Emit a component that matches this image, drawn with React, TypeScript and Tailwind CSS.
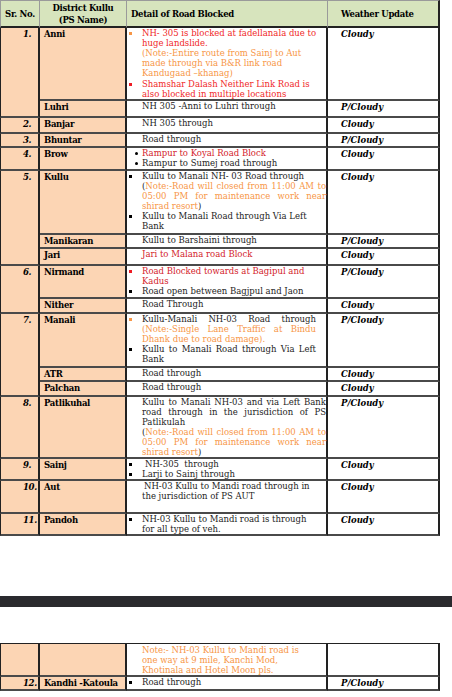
import React from 'react'

type Bul = 'sq' | 'red' | 'orange' | 'dot' | 'none'

const R = 'text-[#f02828]'
const R2 = 'text-[#d3222a]'
const O = 'text-[#f79646]'

function Item({ b = 'none', children }: { b?: Bul; children: React.ReactNode }) {
  let mark: React.ReactNode = null
  if (b === 'sq') mark = <span className="mt-[4px] ml-[2px] block h-[3px] w-[3px] bg-black" />
  if (b === 'red') mark = <span className="mt-[4px] ml-[2px] block h-[3px] w-[3px] bg-[#ee1c25]" />
  if (b === 'orange') mark = <span className="mt-[4px] ml-[2px] block h-[3px] w-[3px] bg-[#f79646]" />
  if (b === 'dot') mark = <span className="mt-[4px] ml-[8px] block h-[3px] w-[3px] rounded-full bg-black" />
  return (
    <div className="flex">
      <div className="w-[15px] shrink-0">{mark}</div>
      <div className="min-w-0 flex-1">{children}</div>
    </div>
  )
}

function L({ className = '', children }: { className?: string; children: React.ReactNode }) {
  return <div className={`whitespace-nowrap ${className}`}>{children}</div>
}

function J({ className = '', children }: { className?: string; children: React.ReactNode }) {
  return <div className={`text-justify [text-align-last:justify] ${className}`}>{children}</div>
}

type Row = { name: string; h: string; w: string; d: React.ReactNode }
type Group = { sr: string; rows: Row[] }

const groups: Group[] = [
  {
    sr: '1.',
    rows: [
      {
        name: 'Anni',
        h: 'h-[73px]',
        w: 'Cloudy',
        d: (
          <>
            <Item b="orange">
              <L className={R}>NH- 305 is blocked at fadellanala due to</L>
              <L className={R}>huge landslide.</L>
              <L className={O}>(Note:-Entire route from Sainj to Aut</L>
              <L className={O}>made through via B&amp;R link road</L>
              <L className={O}>Kandugaad –khanag)</L>
            </Item>
            <div className="h-[1px]" />
            <Item b="red">
              <L className={R}>Shamshar Dalash Neither Link Road is</L>
              <L className={R}>also blocked in multiple locations</L>
            </Item>
          </>
        ),
      },
      { name: 'Luhri', h: 'h-[17px]', w: 'P/Cloudy', d: <Item>NH 305 -Anni to Luhri through</Item> },
    ],
  },
  { sr: '2.', rows: [{ name: 'Banjar', h: 'h-[16px]', w: 'Cloudy', d: <Item>NH 305 through</Item> }] },
  { sr: '3.', rows: [{ name: 'Bhuntar', h: 'h-[14px]', w: 'P/Cloudy', d: <Item>Road through</Item> }] },
  {
    sr: '4.',
    rows: [
      {
        name: 'Brow',
        h: 'h-[23px]',
        w: 'Cloudy',
        d: (
          <>
            <Item b="dot">
              <L className={R2}>Rampur to Koyal Road Block</L>
            </Item>
            <Item b="dot">
              <L>Rampur to Sumej road through</L>
            </Item>
          </>
        ),
      },
    ],
  },
  {
    sr: '5.',
    rows: [
      {
        name: 'Kullu',
        h: 'h-[64px]',
        w: 'Cloudy',
        d: (
          <>
            <Item b="sq">
              <L>Kullu to Manali NH- 03 Road through</L>
              <J>
                (<span className={O}>Note:-Road will closed from 11:00 AM to</span>
              </J>
              <J className={O}>05:00 PM for maintenance work near</J>
              <L>
                <span className={O}>shirad resort</span>)
              </L>
            </Item>
            <Item b="sq">
              <L>Kullu to Manali Road through Via Left</L>
              <L>Bank</L>
            </Item>
          </>
        ),
      },
      { name: 'Manikaran', h: 'h-[14px]', w: 'P/Cloudy', d: <Item>Kullu to Barshaini through</Item> },
      {
        name: 'Jari',
        h: 'h-[17px]',
        w: 'Cloudy',
        d: (
          <Item>
            <L className={R2}>Jari to Malana road Block</L>
          </Item>
        ),
      },
    ],
  },
  {
    sr: '6.',
    rows: [
      {
        name: 'Nirmand',
        h: 'h-[33px]',
        w: 'P/Cloudy',
        d: (
          <>
            <Item b="red">
              <L className={R2}>Road Blocked towards at Bagipul and</L>
              <L className={R2}>Kadus</L>
            </Item>
            <Item b="sq">
              <L>Road open between Bagjpul and Jaon</L>
            </Item>
          </>
        ),
      },
      { name: 'Nither', h: 'h-[15px]', w: 'Cloudy', d: <Item>Road Through</Item> },
    ],
  },
  {
    sr: '7.',
    rows: [
      {
        name: 'Manali',
        h: 'h-[54px]',
        w: 'P/Cloudy',
        d: (
          <div className="w-[189px]">
            <Item b="orange">
              <J>Kullu-Manali NH-03 Road through</J>
              <J className={O}>(Note:-Single Lane Traffic at Bindu</J>
              <L className={O}>Dhank due to road damage).</L>
            </Item>
            <Item b="sq">
              <J>Kullu to Manali Road through Via Left</J>
              <L>Bank</L>
            </Item>
          </div>
        ),
      },
      { name: 'ATR', h: 'h-[14px]', w: 'Cloudy', d: <Item>Road through</Item> },
      { name: 'Palchan', h: 'h-[15px]', w: 'Cloudy', d: <Item>Road through</Item> },
    ],
  },
  {
    sr: '8.',
    rows: [
      {
        name: 'Patlikuhal',
        h: 'h-[62px]',
        w: 'P/Cloudy',
        d: (
          <Item>
            <J>Kullu to Manali NH-03 and via Left Bank</J>
            <J>road through in the jurisdiction of PS</J>
            <L>Patlikulah</L>
            <J>
              (<span className={O}>Note:-Road will closed from 11:00 AM to</span>
            </J>
            <J className={O}>05:00 PM for maintenance work near</J>
            <L>
              <span className={O}>shirad resort</span>)
            </L>
          </Item>
        ),
      },
    ],
  },
  {
    sr: '9.',
    rows: [
      {
        name: 'Sainj',
        h: 'h-[22px]',
        w: 'Cloudy',
        d: (
          <>
            <Item b="sq">
              <L className="pl-[3px]">NH-305&nbsp; through</L>
            </Item>
            <Item b="sq">
              <L>Larji to Sainj through</L>
            </Item>
          </>
        ),
      },
    ],
  },
  {
    sr: '10.',
    rows: [
      {
        name: 'Aut',
        h: 'h-[33px]',
        w: 'Cloudy',
        d: (
          <Item>
            <L className="pl-[2px]">NH-03 Kullu to Mandi road through in</L>
            <L>the jurisdiction of PS AUT</L>
          </Item>
        ),
      },
    ],
  },
  {
    sr: '11.',
    rows: [
      {
        name: 'Pandoh',
        h: 'h-[21px]',
        w: 'Cloudy',
        d: (
          <Item b="sq">
            <L>NH-03 Kullu to Mandi road is through</L>
            <L>for all type of veh.</L>
          </Item>
        ),
      },
    ],
  },
]

const srCell =
  'border-l border-r-2 border-b-2 border-l-[#222] border-r-[#222] border-b-[#4a4a4a] bg-[#fcd5b4] align-top pl-[22px] pt-[1px] text-[8.6px] leading-[11px] tracking-[-0.4px] font-bold italic text-black whitespace-nowrap'
const nameCell =
  'border-r-2 border-b-2 border-r-[#222] border-b-[#4a4a4a] bg-[#fcd5b4] align-top pl-[4px] pt-[1px] font-bold tracking-[-0.3px] text-black whitespace-nowrap'
const detailCell = 'border-r-2 border-b-2 border-r-[#222] border-b-[#4a4a4a] bg-white align-top'
const weatherCell =
  'border-r-2 border-b-2 border-r-[#222] border-b-[#4a4a4a] bg-white align-top pl-[13px] pt-[1px] font-bold italic text-black'

function Cols() {
  return (
    <colgroup>
      <col className="w-[40px]" />
      <col className="w-[87px]" />
      <col className="w-[201px]" />
      <col className="w-[112px]" />
    </colgroup>
  )
}

export default function App() {
  return (
    <div className="h-[697px] w-[452px] overflow-hidden bg-white font-['DejaVu_Serif',serif] text-[8.5px] leading-[10px] text-[#1c1c1c]">
      <table className="w-[440px] table-fixed border-separate border-spacing-0">
        <Cols />
        <thead>
          <tr className="h-[28px] bg-[#d7e4bd] font-bold tracking-[-0.3px] text-black">
            <th className="border-t border-l border-r border-b-2 border-t-[#9a9a9a] border-l-[#9a9a9a] border-r-[#9a9a9a] border-b-[#222] text-center align-middle">
              Sr. No.
            </th>
            <th className="border-t border-r border-b-2 border-t-[#9a9a9a] border-r-[#9a9a9a] border-b-[#222] text-center align-middle leading-[12px]">
              District Kullu
              <br />
              (PS Name)
            </th>
            <th className="border-t border-r border-b-2 border-t-[#9a9a9a] border-r-[#9a9a9a] border-b-[#222] pl-[4px] text-left align-middle">
              Detail of Road Blocked
            </th>
            <th className="border-t border-r-2 border-b-2 border-t-[#9a9a9a] border-r-[#222] border-b-[#222] pl-[13px] text-left align-middle">
              Weather Update
            </th>
          </tr>
        </thead>
        <tbody>
          {groups.map((g) =>
            g.rows.map((r, i) => (
              <tr key={g.sr + r.name} className={r.h}>
                {i === 0 && (
                  <td rowSpan={g.rows.length} className={srCell}>
                    {g.sr}
                  </td>
                )}
                <td className={nameCell}>{r.name}</td>
                <td className={detailCell}>{r.d}</td>
                <td className={weatherCell}>{r.w}</td>
              </tr>
            ))
          )}
        </tbody>
      </table>

      <div className="mt-[60px] h-[11px] w-[452px] bg-[#2a2a2e]" />

      <table className="mt-[36px] w-[440px] table-fixed border-separate border-spacing-0">
        <Cols />
        <tbody>
          <tr className="h-[33px]">
            <td className={`${srCell} border-t border-t-[#222]`} />
            <td className={`${nameCell} border-t border-t-[#222]`} />
            <td className={`${detailCell} border-t border-t-[#222]`}>
              <Item>
                <div className={`${O} pt-[1px]`}>
                  <L>Note:- NH-03 Kullu to Mandi road is</L>
                  <L>one way at 9 mile, Kanchi Mod,</L>
                  <L>Khotinala and Hotel Moon pls.</L>
                </div>
              </Item>
            </td>
            <td className={`${weatherCell} border-t border-t-[#222]`} />
          </tr>
          <tr className="h-[14px]">
            <td className={srCell}>12.</td>
            <td className={nameCell}>Kandhi -Katoula</td>
            <td className={detailCell}>
              <Item b="sq">Road through</Item>
            </td>
            <td className={weatherCell}>P/Cloudy</td>
          </tr>
        </tbody>
      </table>
    </div>
  )
}
